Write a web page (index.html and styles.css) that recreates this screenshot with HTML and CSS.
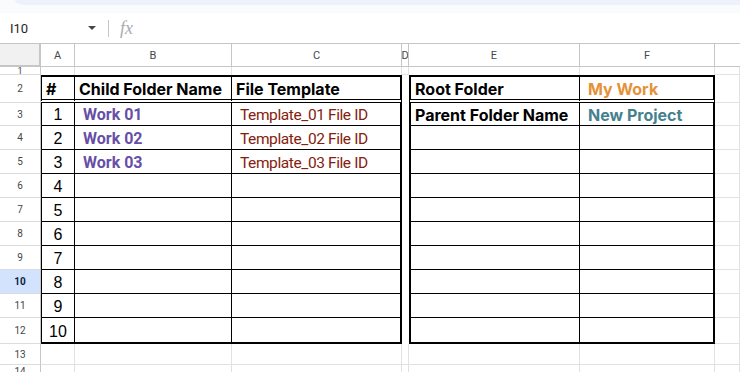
FILE: index.html
```html
<!DOCTYPE html>
<html lang="en">
<head>
    <meta charset="UTF-8">
    <meta name="viewport" content="width=device-width, initial-scale=1.0">
    <title>Folder Setup Sheet</title>
    <link rel="stylesheet" href="styles.css">
</head>
<body>
    <div class="topbar">
        <div class="toolbar"></div>
    </div>

    <div class="formula-bar">
        <div class="name-box">
            <span class="cell-ref">I10</span>
            <span class="caret"></span>
        </div>
        <span class="divider"></span>
        <span class="fx">fx</span>
    </div>

    <div class="sheet">
        <!-- column headers -->
        <div class="corner"></div>
        <div class="col-head">A</div>
        <div class="col-head">B</div>
        <div class="col-head">C</div>
        <div class="col-head">D</div>
        <div class="col-head">E</div>
        <div class="col-head">F</div>
        <div class="col-head last"></div>

        <!-- row 1 -->
        <div class="row-head tiny">1</div>
        <div class="grid nb"></div>
        <div class="grid nb"></div>
        <div class="grid nb"></div>
        <div class="grid"></div>
        <div class="grid nb"></div>
        <div class="grid nb"></div>
        <div class="grid"></div>

        <!-- row 2 -->
        <div class="row-head">2</div>
        <div class="cell top dbl first bold">#</div>
        <div class="cell top dbl bold">Child Folder Name</div>
        <div class="cell top dbl edge-r bold">File Template</div>
        <div class="gap"></div>
        <div class="cell top dbl edge-l bold">Root Folder</div>
        <div class="cell top dbl edge-r bold value orange">My Work</div>
        <div class="grid"></div>

        <!-- row 3 -->
        <div class="row-head">3</div>
        <div class="cell first num">1</div>
        <div class="cell list bold value purple">Work 01</div>
        <div class="cell list small edge-r value brown">Template_01 File ID</div>
        <div class="gap"></div>
        <div class="cell edge-l bold">Parent Folder Name</div>
        <div class="cell edge-r bold value teal">New Project</div>
        <div class="grid"></div>

        <!-- row 4 -->
        <div class="row-head">4</div>
        <div class="cell first num">2</div>
        <div class="cell list bold value purple">Work 02</div>
        <div class="cell list small edge-r value brown">Template_02 File ID</div>
        <div class="gap"></div>
        <div class="cell edge-l"></div>
        <div class="cell edge-r"></div>
        <div class="grid"></div>

        <!-- row 5 -->
        <div class="row-head">5</div>
        <div class="cell first num">3</div>
        <div class="cell list bold value purple">Work 03</div>
        <div class="cell list small edge-r value brown">Template_03 File ID</div>
        <div class="gap"></div>
        <div class="cell edge-l"></div>
        <div class="cell edge-r"></div>
        <div class="grid"></div>

        <!-- row 6 -->
        <div class="row-head">6</div>
        <div class="cell first num">4</div>
        <div class="cell"></div>
        <div class="cell edge-r"></div>
        <div class="gap"></div>
        <div class="cell edge-l"></div>
        <div class="cell edge-r"></div>
        <div class="grid"></div>

        <!-- row 7 -->
        <div class="row-head">7</div>
        <div class="cell first num">5</div>
        <div class="cell"></div>
        <div class="cell edge-r"></div>
        <div class="gap"></div>
        <div class="cell edge-l"></div>
        <div class="cell edge-r"></div>
        <div class="grid"></div>

        <!-- row 8 -->
        <div class="row-head">8</div>
        <div class="cell first num">6</div>
        <div class="cell"></div>
        <div class="cell edge-r"></div>
        <div class="gap"></div>
        <div class="cell edge-l"></div>
        <div class="cell edge-r"></div>
        <div class="grid"></div>

        <!-- row 9 -->
        <div class="row-head">9</div>
        <div class="cell first num">7</div>
        <div class="cell"></div>
        <div class="cell edge-r"></div>
        <div class="gap"></div>
        <div class="cell edge-l"></div>
        <div class="cell edge-r"></div>
        <div class="grid"></div>

        <!-- row 10 (selected) -->
        <div class="row-head selected">10</div>
        <div class="cell first num">8</div>
        <div class="cell"></div>
        <div class="cell edge-r"></div>
        <div class="gap"></div>
        <div class="cell edge-l"></div>
        <div class="cell edge-r"></div>
        <div class="grid"></div>

        <!-- row 11 -->
        <div class="row-head">11</div>
        <div class="cell first num">9</div>
        <div class="cell"></div>
        <div class="cell edge-r"></div>
        <div class="gap"></div>
        <div class="cell edge-l"></div>
        <div class="cell edge-r"></div>
        <div class="grid"></div>

        <!-- row 12 -->
        <div class="row-head">12</div>
        <div class="cell first num bottom">10</div>
        <div class="cell bottom"></div>
        <div class="cell edge-r bottom"></div>
        <div class="gap"></div>
        <div class="cell edge-l bottom"></div>
        <div class="cell edge-r bottom"></div>
        <div class="grid"></div>

        <!-- row 13 -->
        <div class="row-head">13</div>
        <div class="grid"></div>
        <div class="grid"></div>
        <div class="grid"></div>
        <div class="grid"></div>
        <div class="grid"></div>
        <div class="grid"></div>
        <div class="grid"></div>

        <!-- row 14 -->
        <div class="row-head partial">14</div>
        <div class="grid"></div>
        <div class="grid"></div>
        <div class="grid"></div>
        <div class="grid"></div>
        <div class="grid"></div>
        <div class="grid"></div>
        <div class="grid"></div>
    </div>
</body>
</html>
```

FILE: styles.css
```css
body {
    margin: 0;
    font-family: Roboto, "Liberation Sans", Arial, sans-serif;
    background-color: #ffffff;
    overflow: hidden;
}

/* top chrome */
.topbar {
    height: 13px;
    background-color: #f9fbfd;
}
.toolbar {
    height: 5px;
    margin-left: 15px;
    background-color: #edf2fa;
    border-bottom-left-radius: 10px 5px;
}
.formula-bar {
    display: flex;
    align-items: center;
    height: 30px;
}
.name-box {
    display: flex;
    align-items: center;
    width: 108px;
    box-sizing: border-box;
    padding-left: 10px;
}
.cell-ref {
    font-size: 13px;
    color: #1f1f1f;
    flex: 1;
}
.caret {
    width: 0;
    height: 0;
    margin-right: 12px;
    border-left: 4px solid transparent;
    border-right: 4px solid transparent;
    border-top: 4px solid #444746;
}
.divider {
    width: 1px;
    height: 17px;
    background-color: #c4c7c5;
}
.fx {
    margin-left: 11px;
    font-family: "Liberation Serif", serif;
    font-style: italic;
    font-size: 18px;
    color: #a8abad;
}

/* sheet grid */
.sheet {
    display: grid;
    grid-template-columns: 41px 34px 157px 170px 7px 171px 135px 1fr;
    grid-template-rows: 23px 8px 28px 23px repeat(8, 24px) 26px 21px 1fr;
    border-top: 1px solid #c4c7c5;
    height: 329px;
}
.sheet > div {
    box-sizing: border-box;
    overflow: hidden;
    white-space: nowrap;
}
.corner {
    background-color: #f1f1f1;
    border-right: 2px solid #c4c7c5;
    border-bottom: 2px solid #c4c7c5;
}
.col-head {
    display: flex;
    align-items: center;
    justify-content: center;
    font-size: 11px;
    color: #444746;
    border-right: 1px solid #c4c7c5;
    border-bottom: 1px solid #c4c7c5;
}
.col-head.last {
    border-right: none;
}
.row-head {
    display: flex;
    align-items: center;
    justify-content: center;
    font-size: 10px;
    color: #444746;
    border-right: 1px solid #c4c7c5;
    border-bottom: 1px solid #dadce0;
}
.row-head.tiny {
    align-items: flex-start;
    line-height: 8px;
    font-size: 9px;
}
.row-head.partial {
    align-items: flex-start;
    padding-top: 1px;
}
.row-head.selected {
    background-color: #d3e3fd;
    color: #0b1f44;
    font-weight: bold;
}
.grid {
    border-right: 1px solid #e1e1e1;
    border-bottom: 1px solid #e1e1e1;
}
.grid.nb {
    border-bottom: none;
}
.gap {
    background-color: #ffffff;
}

/* bordered table cells */
.cell {
    display: flex;
    align-items: flex-end;
    padding: 0 4px 1px;
    font-family: Inter, "Noto Sans", sans-serif;
    font-size: 16px;
    line-height: 18px;
    color: #000000;
    border-right: 1px solid #000000;
    border-bottom: 1px solid #000000;
}
.cell.list {
    font-family: Roboto, "Liberation Sans", sans-serif;
}
.cell.small {
    font-size: 15.5px;
    letter-spacing: -0.4px;
}
.cell.top {
    border-top: 2px solid #000000;
}
.cell.dbl {
    border-bottom: 4px double #000000;
}
.cell.first {
    border-left: 1px solid #000000;
}
.cell.edge-r {
    border-right: 2px solid #000000;
}
.cell.edge-l {
    border-left: 2px solid #000000;
}
.cell.bottom {
    border-bottom: 2px solid #000000;
}
.cell.bold {
    font-weight: 700;
}
.cell.value {
    padding-left: 8px;
}
.cell.num {
    justify-content: center;
    font-family: "Liberation Sans", Arial, sans-serif;
    font-size: 16px;
}
.purple {
    color: #674ea7;
}
.brown {
    color: #85200c;
}
.orange {
    color: #e69138;
}
.teal {
    color: #45818e;
}
```
